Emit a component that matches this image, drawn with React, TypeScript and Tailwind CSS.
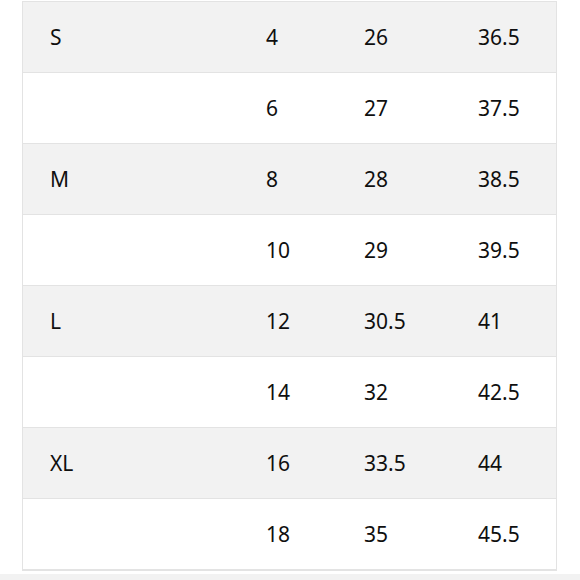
import React from "react";

const rows = [
  { size: "S", us: "4", waist: "26", hip: "36.5" },
  { size: "", us: "6", waist: "27", hip: "37.5" },
  { size: "M", us: "8", waist: "28", hip: "38.5" },
  { size: "", us: "10", waist: "29", hip: "39.5" },
  { size: "L", us: "12", waist: "30.5", hip: "41" },
  { size: "", us: "14", waist: "32", hip: "42.5" },
  { size: "XL", us: "16", waist: "33.5", hip: "44" },
  { size: "", us: "18", waist: "35", hip: "45.5" },
];

const App = () => {
  return (
    <div className="w-[580px] h-[580px] bg-white overflow-hidden flex flex-col font-['Noto_Sans','Open_Sans',sans-serif] text-[#0f0f0f]">
      <div className="ml-[22px] mt-px w-[535px] border border-[#e3e3e3]">
        {rows.map((row, index) => (
          <div
            key={index}
            className={
              index % 2 === 0
                ? "grid grid-cols-[216px_98px_114px_1fr] items-center h-[71px] pl-[27px] pt-[2px] border-b border-[#e3e3e3] bg-[#f2f2f2] text-[21px]"
                : "grid grid-cols-[216px_98px_114px_1fr] items-center h-[71px] pl-[27px] pt-[2px] border-b border-[#e3e3e3] bg-white text-[21px]"
            }
          >
            <span>{row.size}</span>
            <span>{row.us}</span>
            <span>{row.waist}</span>
            <span>{row.hip}</span>
          </div>
        ))}
      </div>
      <div className="mt-auto h-[6px] bg-[#f2f2f2]"></div>
    </div>
  );
};

export default App;
